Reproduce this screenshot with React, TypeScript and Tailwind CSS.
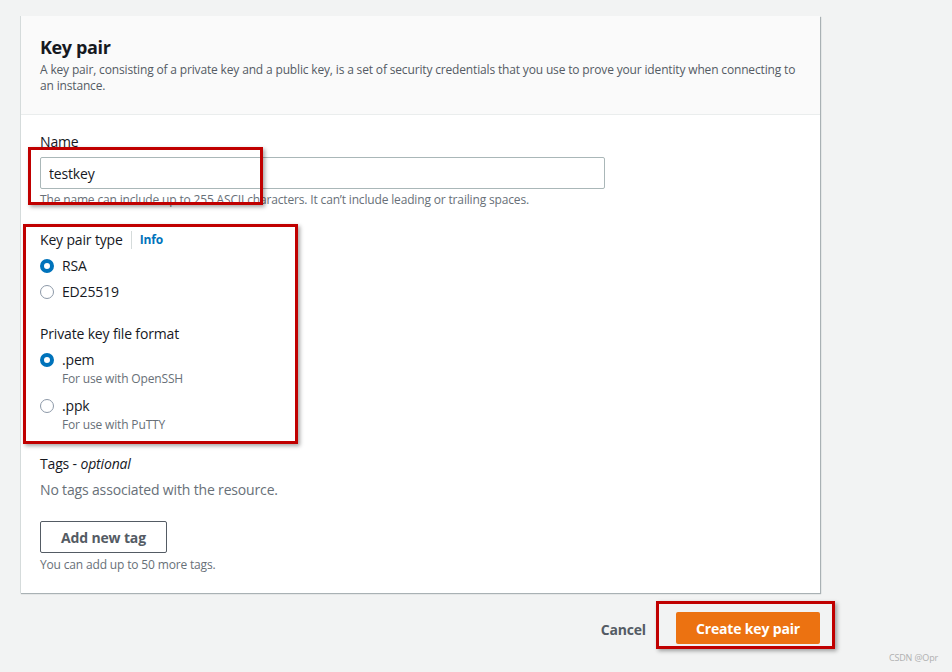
import { useState } from "react"

function Radio({ checked, label, desc, onClick }: { checked: boolean; label: string; desc?: string; onClick: () => void }) {
  return (
    <div className="flex items-start gap-[8px] cursor-pointer" onClick={onClick}>
      <span
        className={`mt-[4px] w-[14px] h-[14px] rounded-full shrink-0 bg-white ${
          checked ? "border-[4px] border-[#0073bb]" : "border-[1.5px] border-[#8d99a8]"
        }`}
      />
      <div>
        <div className="text-[14px] leading-[22px] text-[#16191f]">{label}</div>
        {desc && <div className="text-[12px] leading-[16px] text-[#687078]">{desc}</div>}
      </div>
    </div>
  )
}

export default function App() {
  const [keyType, setKeyType] = useState("rsa")
  const [format, setFormat] = useState("pem")
  const [name, setName] = useState("testkey")

  return (
    <div
      className="relative min-h-[672px] w-[952px] bg-[#f2f3f3] pt-[16px] overflow-hidden tracking-[-0.01em]"
      style={{ fontFamily: '"Open Sans", "Noto Sans", Arial, sans-serif' }}
    >
      <div className="ml-[20px] w-[800px] bg-white border-l border-[#d5dbdb] shadow-[1px_1px_1px_0_rgba(0,28,36,0.3)]">
        <div className="bg-[#fafafa] border-b border-[#eaeded] pl-[19px] pr-[20px] pt-[19px] pb-[20px]">
          <h2 className="text-[18px] leading-[24px] font-bold text-[#16191f] tracking-[-0.02em]">Key pair</h2>
          <p className="mt-[3px] text-[12px] leading-[16px] text-[#545b64]">
            A key pair, consisting of a private key and a public key, is a set of security credentials that you use to prove your identity when connecting to an instance.
          </p>
        </div>

        <div className="pl-[19px] pr-[20px] pt-[16px] pb-[20px]">
          <label className="block text-[14px] leading-[22px] text-[#16191f]">Name</label>
          <input
            value={name}
            onChange={(e) => setName(e.target.value)}
            className="mt-[4px] block w-[565px] h-[32px] border border-[#aab7b8] rounded-[2px] px-[8px] text-[14px] text-[#16191f] outline-none"
          />
          <p className="mt-[3px] text-[12px] leading-[16px] text-[#687078]">
            The name can include up to 255 ASCII characters. It can’t include leading or trailing spaces.
          </p>

          <div className="mt-[21px] flex items-center text-[14px] leading-[22px] text-[#16191f]">
            <span>Key pair type</span>
            <span className="mx-[8px] w-px h-[18px] bg-[#d5dbdb]" />
            <span className="text-[12px] font-bold text-[#0073bb]">Info</span>
          </div>
          <div className="mt-[4px] flex flex-col gap-[4px]">
            <Radio checked={keyType === "rsa"} label="RSA" onClick={() => setKeyType("rsa")} />
            <Radio checked={keyType === "ed"} label="ED25519" onClick={() => setKeyType("ed")} />
          </div>

          <div className="mt-[20px] text-[14px] leading-[22px] text-[#16191f]">Private key file format</div>
          <div className="mt-[4px] flex flex-col gap-[8px]">
            <Radio checked={format === "pem"} label=".pem" desc="For use with OpenSSH" onClick={() => setFormat("pem")} />
            <Radio checked={format === "ppk"} label=".ppk" desc="For use with PuTTY" onClick={() => setFormat("ppk")} />
          </div>

          <div className="mt-[20px] text-[14px] leading-[22px] text-[#16191f]">
            Tags - <i>optional</i>
          </div>
          <p className="mt-[4px] text-[14px] leading-[22px] text-[#687078]">No tags associated with the resource.</p>
          <button className="mt-[20px] h-[32px] w-[127px] border border-[#545b64] rounded-[2px] text-[14px] font-bold text-[#545b64] bg-white">
            Add new tag
          </button>
          <p className="mt-[4px] text-[12px] leading-[16px] text-[#687078]">You can add up to 50 more tags.</p>
        </div>
      </div>

      <div className="w-[820px] flex justify-end items-center mt-[19px]">
        <button className="text-[14px] font-bold text-[#545b64] mr-[30px] mt-[2px]">Cancel</button>
        <button className="w-[144px] h-[32px] rounded-[2px] bg-[#ec7211] text-white text-[14px] font-bold">
          Create key pair
        </button>
      </div>

      {/* annotation boxes */}
      <div className="absolute left-[28px] top-[147px] w-[235px] h-[58px] border-[3px] border-[#c00000] shadow-[2px_2px_4px_rgba(0,0,0,0.35)] pointer-events-none" />
      <div className="absolute left-[23px] top-[224px] w-[275px] h-[220px] border-[3px] border-[#c00000] shadow-[2px_2px_4px_rgba(0,0,0,0.35)] pointer-events-none" />
      <div className="absolute left-[656px] top-[601px] w-[179px] h-[48px] border-[3px] border-[#c00000] shadow-[2px_2px_4px_rgba(0,0,0,0.35)] pointer-events-none" />

      <div className="absolute right-[14px] bottom-[8px] text-[9px] text-[#b0b0b0]">CSDN @Opr</div>
    </div>
  )
}
